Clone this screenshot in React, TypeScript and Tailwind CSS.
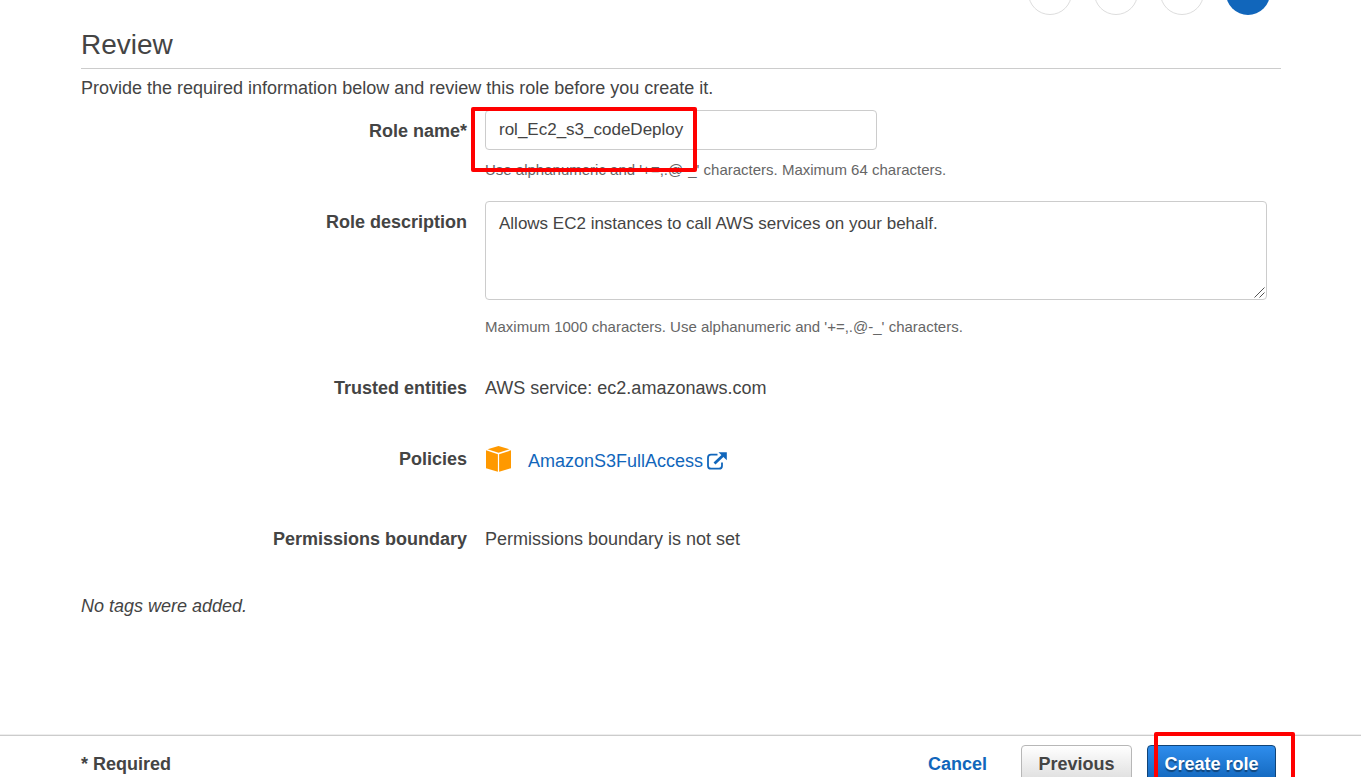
import type { ReactNode } from "react";

function Highlight({ className }: { className: string }) {
  return (
    <div
      aria-hidden="true"
      className={`pointer-events-none absolute z-10 rounded-[2px] border-4 border-[#ff0000] ${className}`}
    />
  );
}

function Row({ label, htmlFor, children }: { label: ReactNode; htmlFor?: string; children: ReactNode }) {
  const labelClass = "w-[386px] shrink-0 text-right font-bold";
  return (
    <div className="flex gap-[18px]">
      {htmlFor ? (
        <label htmlFor={htmlFor} className={`${labelClass} pt-[9px]`}>
          {label}
        </label>
      ) : (
        <div className={labelClass}>{label}</div>
      )}
      <div className="min-w-0 flex-1">{children}</div>
    </div>
  );
}

function PolicyIcon() {
  return (
    <svg width="26" height="26" viewBox="0 0 26 26" fill="#ff9900" aria-hidden="true">
      <path d="M13.500 0 24.500 3.200 13.500 6.800 2.500 3.200Z" />
      <path d="M1 4.300 12.900 8.200V25.800L1 22.200Z" />
      <path d="M26 4.300 14.100 8.200V25.800L26 22.200Z" />
    </svg>
  );
}

function ExternalIcon() {
  return (
    <svg width="20" height="18" viewBox="0 0 20 18" fill="none" aria-hidden="true">
      <path
        d="M10.500 2.700H4A3 3 0 0 0 1 5.700V13.700A3 3 0 0 0 4 16.700H12A3 3 0 0 0 15 13.700V10.500"
        stroke="#1166bb"
        strokeWidth="1.800"
      />
      <path d="M7.500 11.500 16 3.500" stroke="#1166bb" strokeWidth="2.800" />
      <path d="M11.500 .3H19.800V8.300Z" fill="#1166bb" />
    </svg>
  );
}

export default function App() {
  return (
    <div className="flex h-screen flex-col overflow-hidden bg-white font-['Liberation_Sans',Arial,sans-serif] text-[18px] leading-6 text-[#444444]">
      <ol aria-label="Progress" className="flex h-[15px] shrink-0 items-end justify-end gap-[22px] overflow-hidden pr-[91px]">
        <li className="size-11 shrink-0 rounded-full border border-[#dddddd]" />
        <li className="size-11 shrink-0 rounded-full border border-[#dddddd]" />
        <li className="size-11 shrink-0 rounded-full border border-[#dddddd]" />
        <li aria-current="step" className="size-11 shrink-0 rounded-full bg-[#1166bb]" />
      </ol>

      <main className="min-h-0 flex-1 pl-[81px] pr-20">
        <h1 className="mt-3 border-b border-[#cccccc] pb-[5px] text-[28px] leading-9">Review</h1>
        <p className="mt-[7px]">Provide the required information below and review this role before you create it.</p>

        <div className="mt-[10px]">
          <Row label="Role name*" htmlFor="role-name">
            <div className="relative">
              <input
                id="role-name"
                defaultValue="rol_Ec2_s3_codeDeploy"
                spellCheck={false}
                className="block h-10 w-[392px] rounded-[4px] border border-[#cccccc] px-[13px] text-[17px] outline-none"
              />
              <Highlight className="-left-[14px] -top-[3px] h-[65px] w-[226px]" />
            </div>
            <p className="mt-[10px] text-[15px] leading-5 text-[#666666]">
              Use alphanumeric and '+=,.@-_' characters. Maximum 64 characters.
            </p>
          </Row>
        </div>

        <div className="mt-[21px]">
          <Row label="Role description" htmlFor="role-description">
            <div className="pr-[14px]">
              <div className="relative">
                <textarea
                  id="role-description"
                  defaultValue="Allows EC2 instances to call AWS services on your behalf."
                  spellCheck={false}
                  className="block h-[99px] w-full resize-y rounded-[4px] border border-[#cccccc] px-[13px] py-[10px] text-[17px] leading-6 outline-none [&::-webkit-resizer]:bg-transparent"
                />
                <svg
                  width="11"
                  height="11"
                  viewBox="0 0 11 11"
                  stroke="#555555"
                  aria-hidden="true"
                  className="pointer-events-none absolute bottom-[2px] right-[2px]"
                >
                  <path d="M.5 10.500 10.500 .5M5.500 10.500 10.500 5.500" />
                </svg>
              </div>
            </div>
            <p className="mt-[17px] text-[15px] leading-5 text-[#666666]">
              Maximum 1000 characters. Use alphanumeric and '+=,.@-_' characters.
            </p>
          </Row>
        </div>

        <div className="mt-[39px]">
          <Row label="Trusted entities">AWS service: ec2.amazonaws.com</Row>
        </div>

        <div className="mt-[47px]">
          <Row label="Policies">
            <div className="flex h-6 items-center">
              <PolicyIcon />
              <a href="#policy" className="ml-[17px] flex items-center gap-1 pt-1 text-[#1166bb]">
                AmazonS3FullAccess
                <ExternalIcon />
              </a>
            </div>
          </Row>
        </div>

        <div className="mt-14">
          <Row label="Permissions boundary">Permissions boundary is not set</Row>
        </div>

        <p className="mt-[43px] italic">No tags were added.</p>
      </main>

      <footer className="flex h-[43px] shrink-0 items-start justify-between border-t border-[#eeeeee] bg-white pl-[81px] pr-[85px] pt-[10px] shadow-[inset_0_1px_0_#cccccc]">
        <p className="pt-[7px] font-bold">* Required</p>
        <div className="flex items-start font-bold">
          <a href="#cancel" className="mr-[34px] pt-[7px] text-[#1166bb]">
            Cancel
          </a>
          <button
            type="button"
            className="mr-[15px] h-[38px] w-[111px] rounded-[4px] border border-[#b7b7b7] bg-linear-to-b from-white to-[#dddddd] font-bold"
          >
            Previous
          </button>
          <div className="relative">
            <button
              type="button"
              className="h-[38px] w-[129px] rounded-[4px] border border-[#114477] bg-linear-to-b from-[#2e8ded] to-[#1166bb] font-bold text-white text-shadow-[0_2px_1px_rgb(0_0_0/0.4)]"
            >
              Create role
            </button>
            <Highlight className="-top-[13px] left-[7px] h-[70px] w-[141px]" />
          </div>
        </div>
      </footer>
    </div>
  );
}
